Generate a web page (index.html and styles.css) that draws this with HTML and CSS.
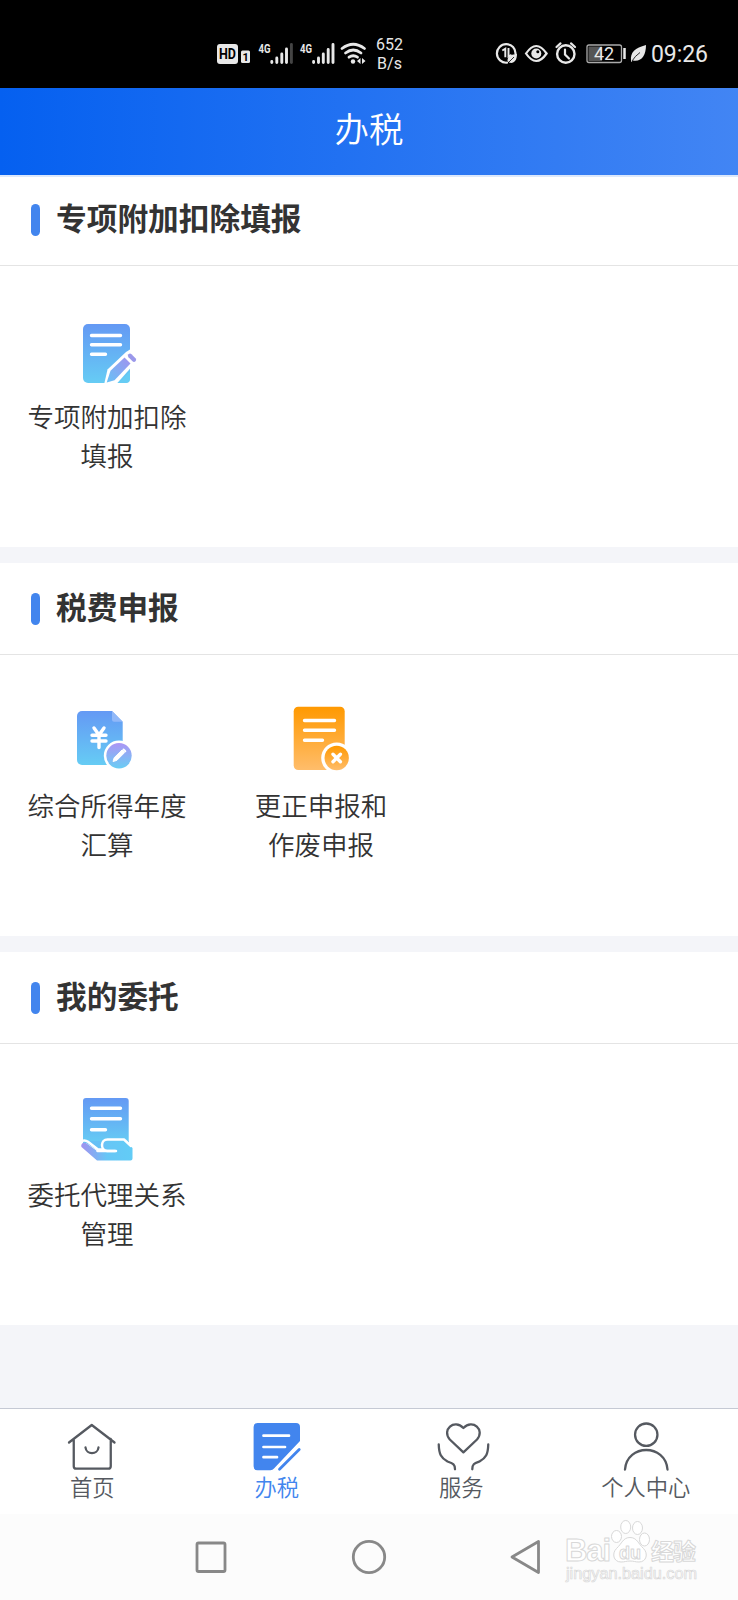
FILE: index.html
```html
<!DOCTYPE html>
<html lang="zh-CN">
<head>
<meta charset="utf-8">
<title>办税</title>
<link rel="stylesheet" href="styles.css">
</head>
<body>
<div class="status">
  <svg class="status-left" width="200" height="50" viewBox="210 30 200 50">
    <rect x="217" y="44" width="21" height="20" rx="3" fill="#e8e8e8"/>
    <text class="st-hd" x="219" y="59" textLength="17" lengthAdjust="spacingAndGlyphs">HD</text>
    <rect x="241" y="50.500" width="9" height="12.500" rx="1.500" fill="#e8e8e8"/>
    <text class="st-one" x="242.400" y="61.200">1</text>
    <text class="st-4g" x="258.500" y="52.500" textLength="12" lengthAdjust="spacingAndGlyphs">4G</text>
    <g stroke="#e8e8e8" stroke-width="2.900" stroke-linecap="round">
      <path d="M271.800 61.500v1M276.800 58v4.500M281.800 54v8.500M286.500 49v13.500M313.600 61.500v1M318.500 58v4.500M323.300 54v8.500M328.200 49.500v13M333 44.500v18"/>
      <path d="M291.400 44.500v18" stroke="#444"/>
    </g>
    <text class="st-4g" x="300" y="52.500" textLength="12" lengthAdjust="spacingAndGlyphs">4G</text>
    <g fill="none" stroke="#e8e8e8" stroke-width="2.800" stroke-linecap="round">
      <path d="M342 48.500q11.200-8.500 22.500 0M345.500 53q7.800-6 15.500 0M349 57.200q4.200-3 8.500 0"/>
    </g>
    <circle cx="353" cy="61.500" r="2.200" fill="#e8e8e8"/>
    <path d="M360.500 58v6l-3.500-3zM362 58v6l3.500-3z" fill="#e8e8e8"/>
    <text class="st-speed" x="389.500" y="50">652</text>
    <text class="st-speed" x="389.500" y="68.500">B/s</text>
  </svg>
  <svg class="status-right" width="228" height="50" viewBox="490 30 228 50">
    <g fill="none" stroke="#e8e8e8" stroke-width="2.200">
      <path d="M515.500 54A9.300 9.300 0 1 0 507 62.700" stroke-linecap="round"/>
      <path d="M502.300 50.500l3-1.800v8.500M508.500 48v8.500l3-1.800" stroke-width="1.900"/>
      <path d="M526 53.500q10.200-15 20.600 0q-10.400 15-20.600 0z" stroke-width="2.200"/>
      <circle cx="565.800" cy="54" r="8.700" stroke-width="2.400"/>
      <path d="M565 49.500v5l4 4M556.500 47l4-3.600M575 47l-4-3.600" stroke-width="2.200" stroke-linecap="round"/>
    </g>
    <path d="M507.500 61c0-5 3-6.500 9.500-7c0 7-3.500 10-8 8.500z" fill="#e8e8e8"/>
    <path d="M508 63l6-6" stroke="#000" stroke-width=".8"/>
    <circle cx="536.300" cy="53.500" r="5" fill="#e8e8e8"/>
    <circle cx="537.800" cy="51.700" r="1.500" fill="#000"/>
    <rect x="587" y="45" width="34.500" height="17.500" rx="2" fill="#000" stroke="#aaa" stroke-width="1.300"/>
    <rect x="588.500" y="46.500" width="13.500" height="14.500" fill="#555"/>
    <path d="M624.500 48v11" stroke="#e8e8e8" stroke-width="2.500"/>
    <text class="st-batt" x="604" y="60">42</text>
    <path d="M631 61c-1-9 4-13 15-16c0 10-4 17-13 15.500l-2 1.500z" fill="#e8e8e8"/>
    <path d="M632 61q3-5 8-8.500" fill="none" stroke="#000" stroke-width=".8"/>
    <text class="st-time" x="651" y="62" textLength="57">09:26</text>
  </svg>
</div>
<header class="title-bar">办税</header>
<main class="content">
  <section class="card">
    <h2 class="card-head"><span class="mark"></span><span class="head-text">专项附加扣除填报</span></h2>
    <div class="grid">
      <a class="item">
        <svg width="80" height="80" viewBox="0 0 80 80">
          <defs>
            <linearGradient id="blue" x1="0" y1="0" x2="0" y2="1"><stop offset="0" stop-color="#6499f4"/><stop offset="1" stop-color="#66ccf4"/></linearGradient>
            <linearGradient id="violet" x1="1" y1="0" x2="0" y2="1"><stop offset="0" stop-color="#a292ef"/><stop offset="1" stop-color="#66c2f6"/></linearGradient>
            <linearGradient id="badge" x1="0" y1="0" x2="0" y2="1"><stop offset="0" stop-color="#ac95f5"/><stop offset="1" stop-color="#69cdf4"/></linearGradient>
            <linearGradient id="hand" x1="0" y1="0" x2="1" y2="0"><stop offset="0" stop-color="#a292ef"/><stop offset=".5" stop-color="#66c6f6"/><stop offset="1" stop-color="#62ccf6"/></linearGradient>
            <linearGradient id="orange" x1="0" y1="0" x2="0" y2="1"><stop offset="0" stop-color="#ff9900"/><stop offset="1" stop-color="#ffbd6b"/></linearGradient>
          </defs>
          <rect x="16" y="9" width="47" height="59" rx="5" fill="url(#blue)"/>
          <path class="rule" d="M24.500 20.500H53.500M24.500 29.800H53.500M24.500 39.200H38.500"/>
          <path d="M37.200 69l3.300-14.500L59 37l4-2.500l9 9L49.500 69z" fill="#fff"/>
          <path d="M39.700 67.500l3.800-11.700L57.500 42.500l6 6L47.500 65.200z" fill="url(#violet)"/>
          <path d="M51.500 68L63 56.500V64a4 4 0 0 1-4 4z" fill="#66ccf4"/>
          <path d="M63 40.800l4 4" stroke="#9a98ea" stroke-width="4.200" stroke-linecap="round"/>
        </svg>
        <span>专项附加扣除<br>填报</span>
      </a>
    </div>
  </section>
  <section class="card">
    <h2 class="card-head"><span class="mark"></span><span class="head-text">税费申报</span></h2>
    <div class="grid">
      <a class="item">
        <svg width="80" height="80" viewBox="0 0 80 80">
          <path d="M15 7H45L55.700 17.700V56a5 5 0 0 1-5 5H15a5 5 0 0 1-5-5V12a5 5 0 0 1 5-5z" fill="url(#blue)"/>
          <path d="M45 7L55.700 17.700H47a2 2 0 0 1-2-2z" fill="#91b8f8"/>
          <path d="M27 24l5 7l5-7M32 31V43.500M25 31.200H39M25 37H39" fill="none" stroke="#fff" stroke-width="3.400" stroke-linecap="round"/>
          <circle cx="52" cy="51.700" r="15.200" fill="#fff"/>
          <circle cx="52" cy="51.700" r="12.700" fill="url(#badge)"/>
          <path d="M46 57.500l1.200-3.800L55 46l2.600 2.600l-7.800 7.800z" fill="#fff" stroke="#fff" stroke-width="1" stroke-linejoin="round"/>
          <path d="M56.500 45.500l1.800 1.800" stroke="#fff" stroke-width="2" stroke-linecap="round"/>
        </svg>
        <span>综合所得年度<br>汇算</span>
      </a>
      <a class="item">
        <svg width="80" height="80" viewBox="0 0 80 80">
          <rect x="12.700" y="2.700" width="51" height="63.300" rx="4.500" fill="url(#orange)"/>
          <path class="rule" d="M23.500 16.500H53.500M23.500 26.300H53.500M23.500 36.300H41.500"/>
          <circle cx="55.700" cy="54" r="15.500" fill="#fff"/>
          <circle cx="55.700" cy="54" r="12.200" fill="url(#orange)"/>
          <path d="M52 50.300l7.400 7.400M59.400 50.300L52 57.700" stroke="#fff" stroke-width="3.400" stroke-linecap="round"/>
        </svg>
        <span>更正申报和<br>作废申报</span>
      </a>
    </div>
  </section>
  <section class="card">
    <h2 class="card-head"><span class="mark"></span><span class="head-text">我的委托</span></h2>
    <div class="grid">
      <a class="item">
        <svg width="80" height="80" viewBox="0 0 80 80">
          <path d="M19 5H58.700a3 3 0 0 1 3 3V50H16V8a3 3 0 0 1 3-3z" fill="url(#blue)"/>
          <path d="M16 48h45.700v9H30z" fill="#65c0f5"/>
          <path class="rule" d="M24.500 15.200H53.500M24.500 25.800H53.500M24.500 36.700H38.500"/>
          <path d="M14.500 54c-1-3 1.500-5.200 4.500-4l11 8H36c-2.500-4-.5-10.500 5-10.500H58l7.500 7.500V65.500a2 2 0 0 1-2 2H30z" fill="url(#hand)"/>
          <path d="M15 48q3-1.500 6 .8L31 56.500H35M49 58H40C33 57 33.500 46.500 40.500 46.500H57l7 6.500" fill="none" stroke="#fff" stroke-width="2.500" stroke-linecap="round" stroke-linejoin="round"/>
          <path d="M30.500 57.900H48" stroke="#fff" stroke-width="2.500" stroke-linecap="round"/>
        </svg>
        <span>委托代理关系<br>管理</span>
      </a>
    </div>
  </section>
</main>
<nav class="tabs">
  <a class="tab">
    <svg class="line" width="60" height="54" viewBox="0 0 60 54">
      <path d="M7 24.500L29.750 7L52.500 24.500M11.750 21V48.200a2.500 2.500 0 0 0 2.500 2.500H46.250a2.500 2.500 0 0 0 2.500-2.500V21M23.500 29.500c.8 7.500 12.200 7.500 13 0"/>
    </svg><span>首页</span>
  </a>
  <a class="tab active">
    <svg width="60" height="54" viewBox="0 0 60 54">
      <path d="M10.600 5H49a4 4 0 0 1 4 4V23L27 50.500a5 5 0 0 1-3.500 1.800H10.600a4 4 0 0 1-4-4V9a4 4 0 0 1 4-4z" fill="#4285ee"/>
      <path d="M16.500 17.700H42M16.500 29H38M16.500 39.200H30" stroke="#fff" stroke-width="2.700" stroke-linecap="round"/>
      <path d="M52.200 31.500L32.500 51.200" stroke="#4285ee" stroke-width="2.800" stroke-linecap="round"/>
    </svg><span>办税</span>
  </a>
  <a class="tab">
    <svg class="line" width="60" height="54" viewBox="0 0 60 54">
      <path d="M32.400 34.300L18.800 21.500C10.500 12 23 .5 32.400 10C41.800 .5 54.300 12 46 21.500zM7.750 26.500C8 36 10 40 16.500 43.500C22 45.500 24 46 24 51.300M57.250 26.500C57 36 55 40 48.500 43.500C43 45.500 41.300 46 41.300 51.300"/>
    </svg><span>服务</span>
  </a>
  <a class="tab">
    <svg class="line" width="60" height="54" viewBox="0 0 60 54">
      <circle cx="30.250" cy="16.700" r="11.200"/>
      <path d="M9 51.500C11 25.500 49.500 25.500 51.500 51.500"/>
    </svg><span>个人中心</span>
  </a>
</nav>
<footer class="sysnav">
  <svg width="40" height="40" viewBox="0 0 40 40"><rect x="5" y="6" width="28" height="28.500" rx="1.500"/></svg>
  <svg width="40" height="40" viewBox="0 0 40 40"><circle cx="20" cy="20" r="15.700"/></svg>
  <svg width="40" height="40" viewBox="0 0 40 40"><path d="M32.500 4.500V35.500L6 20z"/></svg>
  <svg class="watermark" width="140" height="70" viewBox="562 1516 140 70">
    <text class="wm-big" x="565" y="1561" textLength="46">Bai</text>
    <ellipse cx="616.500" cy="1536.500" rx="5" ry="6"/>
    <ellipse cx="625.700" cy="1527" rx="5" ry="6.500"/>
    <ellipse cx="637.500" cy="1528" rx="5" ry="6.500"/>
    <ellipse cx="644.500" cy="1539.500" rx="5" ry="6.500"/>
    <path d="M630 1537.500c7 0 8 6 13.500 11c5 5 3 13.500-4.500 13.500c-4 0-5-1-9-1s-5 1-9 1c-7.500 0-9.500-8.500-4.500-13.500c5.500-5 6.500-11 13.500-11z"/>
    <text class="wm-du" x="619" y="1559" textLength="22">du</text>
    <text class="wm-cn" x="651" y="1560" textLength="45">经验</text>
    <text class="wm-url" x="566" y="1579" textLength="131" lengthAdjust="spacingAndGlyphs">jingyan.baidu.com</text>
  </svg>
</footer>
</body>
</html>
```
FILE: styles.css
```css
* { box-sizing: border-box; }
body {
  margin: 0;
  width: 738px;
  height: 1600px;
  display: flex;
  flex-direction: column;
  background: #f4f5f9;
  font-family: "Noto Sans CJK SC", sans-serif;
  color: #333;
}
svg { display: block; flex: none; }

.status {
  height: 88px;
  flex: none;
  background: #000;
  display: flex;
  justify-content: space-between;
  padding: 30px 20px 0 210px;
}
.status text { font-family: Roboto, sans-serif; fill: #e8e8e8; }
.status .st-hd { font-size: 14px; font-weight: 700; fill: #000; }
.status .st-one { font-size: 11px; font-weight: 700; fill: #000; }
.status .st-4g { font-size: 13px; font-weight: 700; }
.status .st-speed { font-size: 16px; text-anchor: middle; }
.status .st-batt { font-size: 18px; text-anchor: middle; }
.status .st-time { font-size: 23px; }

.title-bar {
  height: 87px;
  flex: none;
  background: linear-gradient(90deg, #0560f0, #4285f4);
  box-shadow: 0 2px 0 #dce8fb;
  color: #fff;
  font-size: 34.5px;
  font-weight: 350;
  line-height: 78px;
  text-align: center;
  position: relative;
}

.content {
  flex: 1;
  display: flex;
  flex-direction: column;
  gap: 16px;
  margin-top: -1px;
}
.card { height: 373px; flex: none; background: #fff; }
.card-head {
  height: 92px;
  margin: 0;
  padding: 1px 0 0 31px;
  border-bottom: 1px solid #e4e4e4;
  display: flex;
  align-items: center;
  gap: 16px;
  font-size: 30.7px;
  font-weight: 700;
  line-height: 44px;
}
.head-text { padding-bottom: 6px; }
.mark { width: 9px; height: 32px; border-radius: 4.5px; background: #4285ee; }
.grid {
  display: grid;
  grid-template-columns: repeat(3, 214px);
  padding-top: 49px;
}
.item {
  display: flex;
  flex-direction: column;
  align-items: center;
  gap: 1px;
  font-size: 26.5px;
  font-weight: 350;
  line-height: 39px;
  text-align: center;
}
.rule { fill: none; stroke: #fff; stroke-width: 3.4; stroke-linecap: round; }

.tabs {
  height: 106px;
  flex: none;
  display: grid;
  grid-template-columns: repeat(4, 1fr);
  background: #fff;
  border-top: 1px solid #c5c9d4;
}
.tab {
  display: flex;
  flex-direction: column;
  align-items: center;
  padding-top: 9px;
  font-size: 22.3px;
  font-weight: 350;
  line-height: 28px;
  color: #555960;
}
.tab.active { color: #4285ee; }
.line { fill: none; stroke: #555960; stroke-width: 2.3; stroke-linecap: round; stroke-linejoin: round; }

.sysnav {
  height: 86px;
  flex: none;
  position: relative;
  display: grid;
  grid-template-columns: repeat(3, 157px);
  justify-items: center;
  padding: 23px 0 0 133px;
  background: #fcfcfc;
}
.sysnav svg { fill: none; stroke: #888; stroke-width: 2.8; stroke-linejoin: round; }
.sysnav .watermark {
  position: absolute;
  left: 562px;
  top: 2px;
  fill: #fff;
  stroke: #d8d8d8;
  stroke-width: 1;
}
.watermark text { font-family: "Liberation Sans", "Noto Sans CJK SC", sans-serif; }
.watermark .wm-big { font-size: 31px; font-weight: 700; }
.watermark .wm-du { font-size: 18px; font-weight: 700; }
.watermark .wm-cn { font-size: 23px; font-weight: 700; }
.watermark .wm-url { font-size: 16px; stroke-width: .7; }
```
